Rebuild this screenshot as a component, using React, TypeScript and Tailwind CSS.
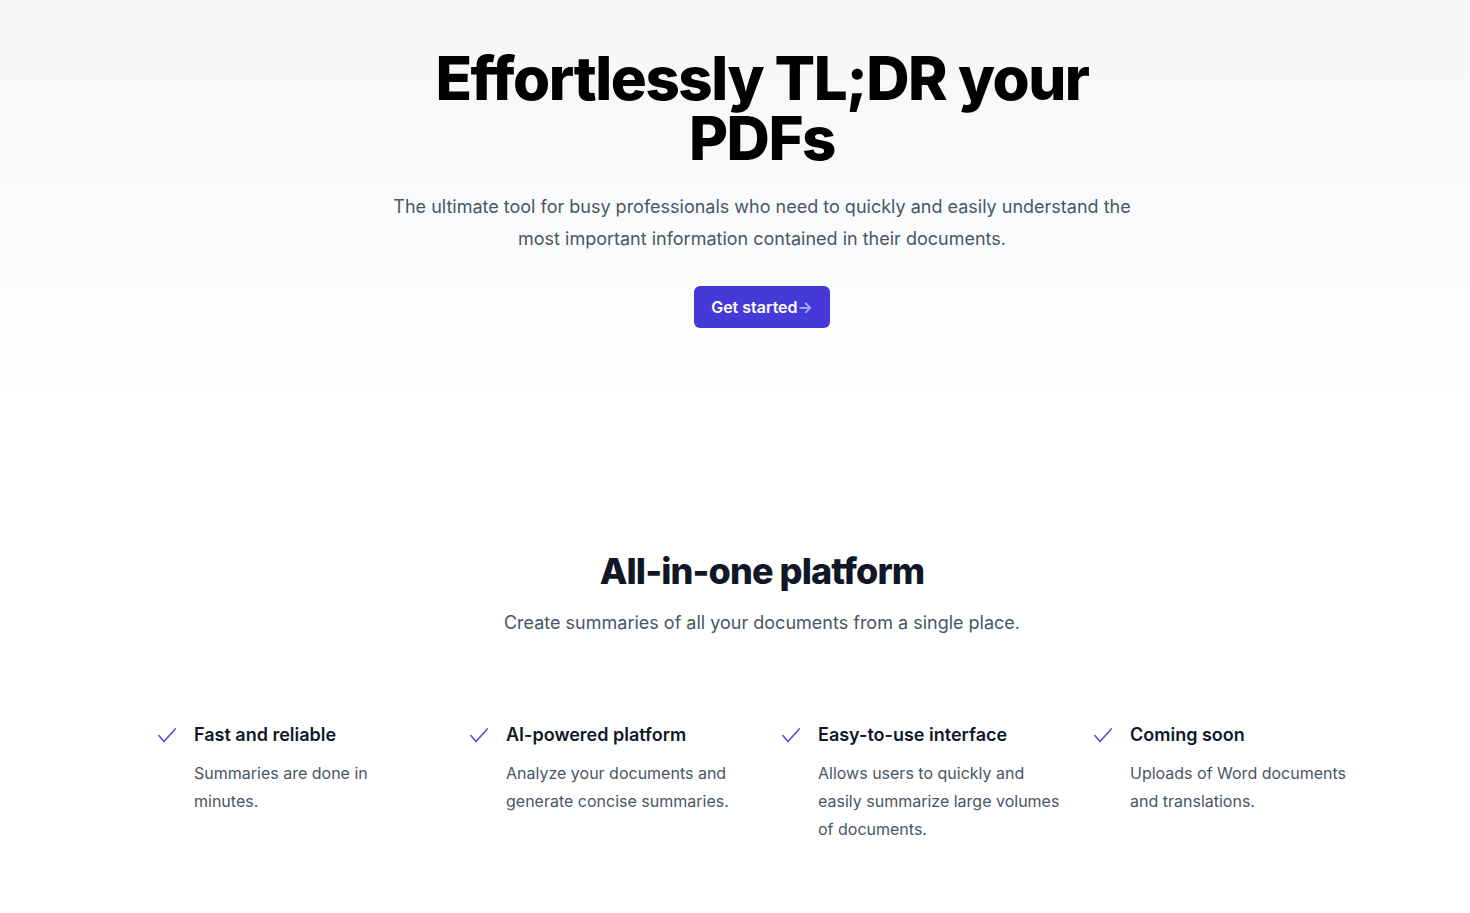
import React from "react";

const features = [
  { title: "Fast and reliable", desc: ["Summaries are done in", "minutes."] },
  { title: "AI-powered platform", desc: ["Analyze your documents and", "generate concise summaries."] },
  { title: "Easy-to-use interface", desc: ["Allows users to quickly and", "easily summarize large volumes", "of documents."] },
  { title: "Coming soon", desc: ["Uploads of Word documents", "and translations."] },
];

function Check() {
  return (
    <svg viewBox="0 0 18 15" className="absolute left-1 top-[5px] h-[15px] w-[18px]" fill="none">
      <path d="M0.8 7.6 L6 13.6 L17.2 0.9" stroke="#4f46e5" strokeWidth="1.5" strokeLinecap="round" strokeLinejoin="round" />
    </svg>
  );
}

export default function App() {
  return (
    <div className="min-h-screen bg-white font-['Inter',sans-serif] antialiased">
      <div className="pl-[54px]">
        <section className="-ml-[54px] bg-gradient-to-b from-[#f5f6f8] to-white pl-[54px] pt-12 pb-18">
          <div className="mx-auto flex max-w-3xl flex-col items-center text-center">
            <h1 className="max-w-2xl text-[60px] font-extrabold leading-none tracking-tight text-black">
              Effortlessly TL;DR your PDFs
            </h1>
            <p className="mt-[23px] text-lg leading-8 text-gray-600">
              The ultimate tool for busy professionals who need to quickly and easily understand the most important information contained in their documents.
            </p>
            <a
              href="#"
              className="mt-[31px] inline-flex h-[42px] items-center rounded-md bg-[#4539d8] px-[17px] text-base font-semibold text-white"
            >
              Get started<span className="text-indigo-300">→</span>
            </a>
          </div>
        </section>

        <section className="pt-[151px] pb-16">
          <div className="mx-auto max-w-2xl text-center">
            <h2 className="text-4xl font-extrabold leading-10 tracking-tight text-gray-900">All-in-one platform</h2>
            <p className="mt-4 text-lg leading-8 text-gray-600">Create summaries of all your documents from a single place.</p>
          </div>
          <dl className="mx-auto mt-21 grid w-[1216px] grid-cols-4 gap-x-8">
            {features.map((f) => (
              <div key={f.title} className="relative">
                <dt>
                  <Check />
                  <p className="ml-10 text-lg font-semibold leading-6 text-gray-900">{f.title}</p>
                </dt>
                <dd className="ml-10 mt-3 whitespace-nowrap text-base leading-7 text-gray-600">
                  {f.desc.map((line, i) => (
                    <React.Fragment key={i}>
                      {i > 0 && <br />}
                      {line}
                    </React.Fragment>
                  ))}
                </dd>
              </div>
            ))}
          </dl>
        </section>
      </div>
    </div>
  );
}
